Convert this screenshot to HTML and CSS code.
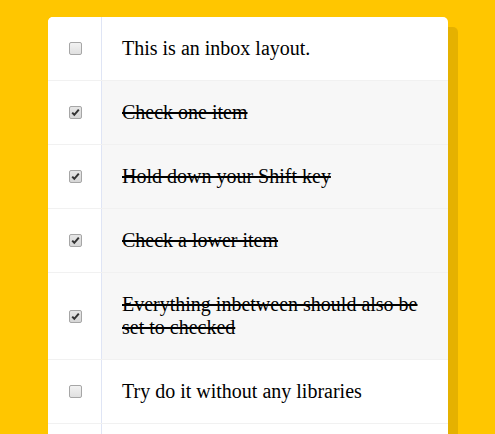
FILE: index.html
```html
<!DOCTYPE html>
<html>
<head>
<meta charset="utf-8">
<link rel="stylesheet" href="styles.css">
</head>
<body>
<div class="inbox">
  <div class="item">
    <span class="check"><span class="box"></span></span>
    <span class="text">This is an inbox layout.</span>
  </div>
  <div class="item done">
    <span class="check"><span class="box on"><svg viewBox="0 0 11 11" width="11" height="11"><path d="M2.2 5.6 L4.3 7.8 L8.8 2.6" fill="none" stroke="#333" stroke-width="2"/></svg></span></span>
    <span class="text">Check one item</span>
  </div>
  <div class="item done">
    <span class="check"><span class="box on"><svg viewBox="0 0 11 11" width="11" height="11"><path d="M2.2 5.6 L4.3 7.8 L8.8 2.6" fill="none" stroke="#333" stroke-width="2"/></svg></span></span>
    <span class="text">Hold down your Shift key</span>
  </div>
  <div class="item done">
    <span class="check"><span class="box on"><svg viewBox="0 0 11 11" width="11" height="11"><path d="M2.2 5.6 L4.3 7.8 L8.8 2.6" fill="none" stroke="#333" stroke-width="2"/></svg></span></span>
    <span class="text">Check a lower item</span>
  </div>
  <div class="item done">
    <span class="check"><span class="box on"><svg viewBox="0 0 11 11" width="11" height="11"><path d="M2.2 5.6 L4.3 7.8 L8.8 2.6" fill="none" stroke="#333" stroke-width="2"/></svg></span></span>
    <span class="text">Everything inbetween should also be set to checked</span>
  </div>
  <div class="item">
    <span class="check"><span class="box"></span></span>
    <span class="text">Try do it without any libraries</span>
  </div>
  <div class="item">
    <span class="check"><span class="box"></span></span>
    <span class="text">Just regular JavaScript</span>
  </div>
</div>
</body>
</html>
```

FILE: styles.css
```css
html, body {
  margin: 0;
  padding: 0;
}
body {
  background: #ffc600;
  font-family: "Liberation Serif", "Times New Roman", serif;
  padding-top: 17px;
  height: 434px;
  overflow: hidden;
  box-sizing: border-box;
}
.inbox {
  margin-left: 48px;
  width: 400px;
  background: #fff;
  border-radius: 5px 5px 0 0;
  box-shadow: 10px 10px 0 rgba(0, 0, 0, 0.1);
}
.item {
  display: flex;
  border-bottom: 1px solid #f1f1f1;
}
.check {
  flex: 0 0 53px;
  display: flex;
  align-items: center;
  justify-content: center;
  border-right: 1px solid #dfe5f5;
  background: #fff;
}
.box {
  display: block;
  box-sizing: border-box;
  width: 13px;
  height: 13px;
  margin-left: 1px;
  border: 1px solid #a6a6a6;
  border-radius: 2px;
  background: linear-gradient(#f2f2f2, #e0e0e0);
}
.box svg {
  display: block;
}
.box.on {
  background: linear-gradient(#e6e6e6, #d6d6d6);
}
.inbox .item:first-child .check {
  border-top-left-radius: 5px;
}
.text {
  flex: 1;
  padding: 20px 28px 20px 20px;
  font-size: 20px;
  line-height: 23px;
  color: #000;
}
.done .text {
  background: #f7f7f7;
  text-decoration: line-through;
  text-decoration-thickness: 2px;
}
```
